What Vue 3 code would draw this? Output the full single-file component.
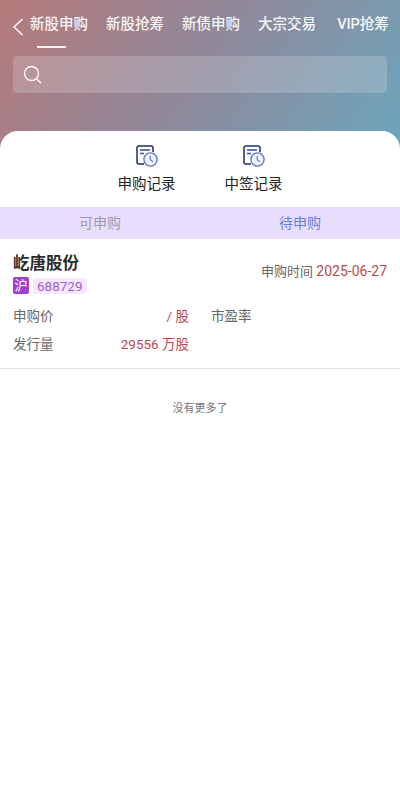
<script setup>
const tabs = [
  { label: '新股申购', active: true },
  { label: '新股抢筹' },
  { label: '新债申购' },
  { label: '大宗交易' },
  { label: 'VIP抢筹' },
]
const records = ['申购记录', '中签记录']
</script>

<template>
  <div class="page">
    <header class="hero">
      <nav class="nav">
        <svg class="back" width="12" height="20" viewBox="0 0 12 20" fill="none">
          <path d="M10.5 2 L2 10 L10.5 18" stroke="#fff" stroke-width="1.4" />
        </svg>
        <div class="tabs">
          <div v-for="t in tabs" :key="t.label" class="tab" :class="{ on: t.active }">{{ t.label }}</div>
        </div>
      </nav>
      <div class="search">
        <svg width="20" height="20" viewBox="0 0 20 20" fill="none">
          <circle cx="8.5" cy="8.5" r="7" stroke="#fff" stroke-width="1.3" />
          <path d="M13.8 14 L18 18" stroke="#fff" stroke-width="1.3" />
        </svg>
      </div>
    </header>

    <main class="sheet">
      <section class="records">
        <div v-for="r in records" :key="r" class="record">
          <svg width="22" height="22" viewBox="0 0 22 22" fill="none">
            <path d="M8 19 H3 Q1 19 1 17 V3 Q1 1 3 1 H15 Q17 1 17 3 V7" stroke="#1e2a6e" stroke-width="1.5" />
            <path d="M4 5 H14 M4 8.5 H8" stroke="#3a4a96" stroke-width="1.4" />
            <circle cx="14.5" cy="14.5" r="6.6" fill="#f0f3fc" stroke="#5f78cf" stroke-width="1.4" />
            <path d="M14.3 11 V14.8 L17 16.8" stroke="#5f78cf" stroke-width="1.2" />
          </svg>
          <span>{{ r }}</span>
        </div>
      </section>

      <section class="segments">
        <div class="seg">可申购</div>
        <div class="seg on">待申购</div>
      </section>

      <article class="stock">
        <div class="top">
          <div>
            <div class="name">屹唐股份</div>
            <div class="code">
              <span class="mkt">沪</span>
              <span class="num">688729</span>
            </div>
          </div>
          <div class="date">申购时间 <em>2025-06-27</em></div>
        </div>
        <div class="grid">
          <div class="cell"><span>申购价</span><em>/ 股</em></div>
          <div class="cell"><span>市盈率</span></div>
          <div class="cell"><span>发行量</span><em>29556 万股</em></div>
        </div>
      </article>

      <p class="more">没有更多了</p>
    </main>
  </div>
</template>

<style scoped>
.page {
  position: relative;
  width: 400px;
  height: 800px;
  overflow: hidden;
  background: #fff;
  font-family: Roboto, "Noto Sans CJK SC", sans-serif;
}
.hero {
  height: 150px;
  background: linear-gradient(125deg, #b67a7a 0%, #90889a 48%, #6ca6bc 100%);
  box-sizing: border-box;
  padding-top: 8px;
}
.nav {
  display: flex;
  align-items: flex-start;
  height: 48px;
  padding-left: 12px;
}
.back {
  margin-top: 9px;
  flex: none;
}
.tabs {
  display: flex;
  margin-left: -3px;
}
.tab {
  position: relative;
  width: 76px;
  flex: none;
  text-align: center;
  height: 40px;
  line-height: 33px;
  font-size: 14.5px;
  font-weight: 500;
  color: #fff;
  white-space: nowrap;
  opacity: .92;
}
.tab.on::after {
  content: "";
  position: absolute;
  left: 16px;
  bottom: 0;
  width: 29px;
  height: 2px;
  background: #fff;
}
.search {
  margin: 0 13px;
  height: 37px;
  box-sizing: border-box;
  background: rgba(255, 255, 255, .18);
  border-radius: 4px;
  display: flex;
  align-items: center;
  padding-left: 10px;
}
.sheet {
  position: absolute;
  top: 131px;
  left: 0;
  right: 0;
  bottom: 0;
  background: #fff;
  border-radius: 18px 18px 0 0;
}
.records {
  display: flex;
  justify-content: center;
  gap: 49px;
  height: 76px;
  padding-top: 14px;
  box-sizing: border-box;
}
.record {
  display: flex;
  flex-direction: column;
  align-items: center;
  gap: 5px;
  font-size: 14.5px;
  color: #222;
  width: 58px;
  white-space: nowrap;
}
.segments {
  display: flex;
  height: 32px;
  background: #e6defc;
}
.seg {
  flex: 1;
  text-align: center;
  line-height: 33px;
  font-size: 14px;
  color: #a09aa8;
}
.seg.on {
  color: #6a7fd8;
}
.stock {
  padding: 15px 13px 0;
  height: 130px;
  box-sizing: border-box;
  border-bottom: 1px solid #e2e2e2;
}
.top {
  display: flex;
  justify-content: space-between;
  align-items: center;
}
.name {
  font-size: 16.5px;
  font-weight: 700;
  color: #2b2b2b;
  line-height: 20px;
}
.code {
  display: flex;
  align-items: center;
  gap: 4px;
  margin-top: 3px;
}
.mkt {
  width: 16px;
  height: 17px;
  line-height: 17px;
  text-align: center;
  font-size: 13px;
  color: #fff;
  background: #a03fd0;
  border-radius: 2px;
}
.num {
  height: 16px;
  line-height: 16px;
  padding: 0 4px;
  font-size: 13.5px;
  color: #a35ad6;
  background: #f6e9fd;
  border-radius: 2px;
}
.date {
  font-size: 13px;
  color: #666;
  margin-top: -8px;
}
.date em {
  font-size: 14px;
}
em {
  font-style: normal;
  color: #b84a4e;
}
.grid {
  display: grid;
  grid-template-columns: 176px 1fr;
  column-gap: 22px;
  row-gap: 9px;
  margin-top: 13px;
  font-size: 13.5px;
  color: #666;
  line-height: 19px;
}
.cell {
  display: flex;
  justify-content: space-between;
}
.more {
  margin: 33px 0 0;
  text-align: center;
  font-size: 11px;
  line-height: 14px;
  color: #777;
}
</style>
